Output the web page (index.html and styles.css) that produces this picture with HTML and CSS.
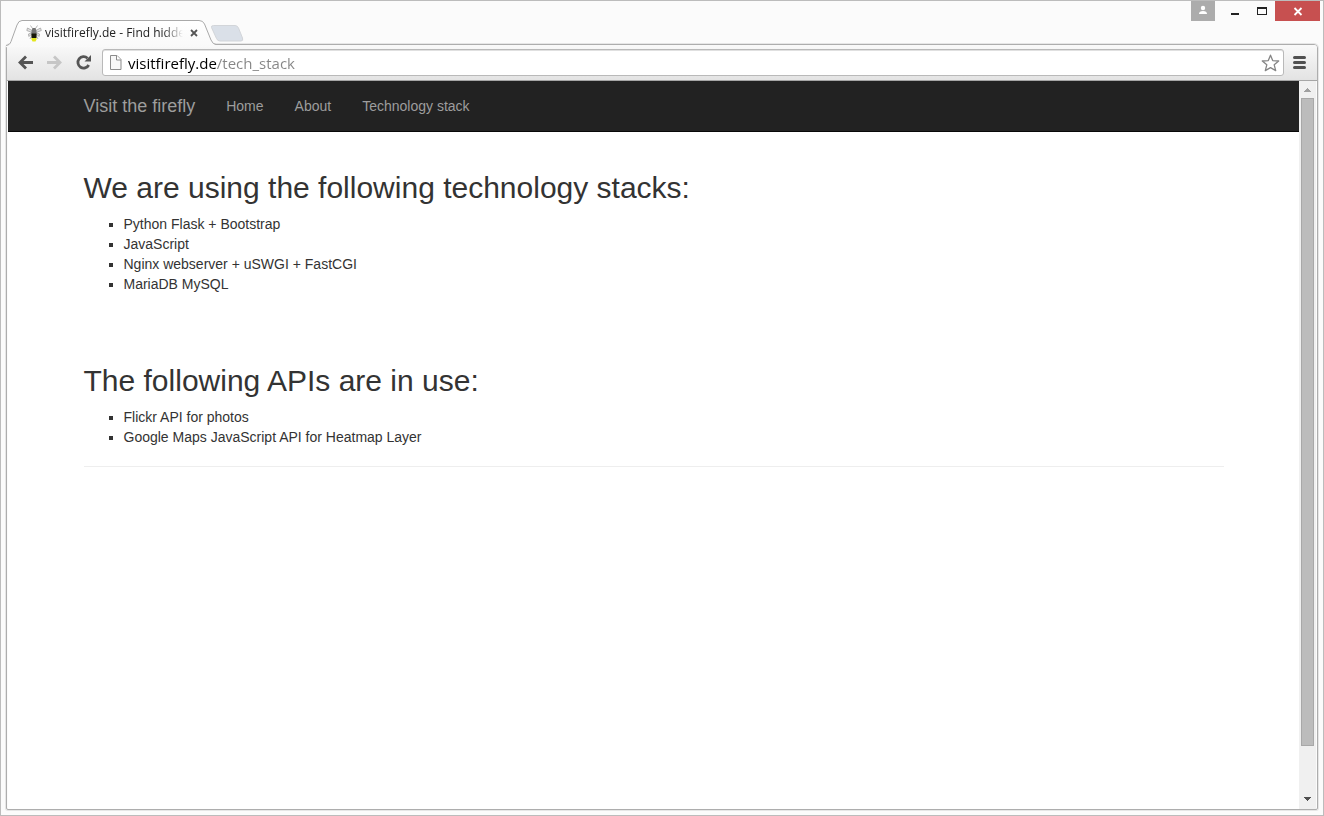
FILE: index.html
```html
<!DOCTYPE html>
<html lang="en">
<head>
<meta charset="utf-8">
<title>visitfirefly.de - Find hidden</title>
<link rel="stylesheet" href="styles.css">
</head>
<body>
<div class="window">
  <header class="titlebar">
    <div class="tab">
      <svg class="tab-shape" width="211" height="27" viewBox="0 0 211 27" aria-hidden="true">
        <defs><linearGradient id="tabFill" x1="0" y1="0" x2="0" y2="1"><stop offset="0" stop-color="#fff"/><stop offset="1" stop-color="#f9f9f9"/></linearGradient></defs>
        <path d="M1 27V25.500C4 25 5 24 6 21.500L12 5Q13.500 .5 17 .5H194Q198 .5 199.500 4L206 20Q208 24.500 211 24.500V27Z" fill="url(#tabFill)"/>
        <path d="M1 25.500C4 25 5 24 6 21.500L12 5Q13.500 .5 17 .5H194Q198 .5 199.500 4L206 20Q208 24.500 211 24.500" fill="none" stroke="#a9a9a9"/>
      </svg>
      <svg class="favicon" width="16" height="17" viewBox="0 0 16 17" aria-hidden="true">
        <path d="M7 6L1.500 3 .8 5.500 6 7.500M9 6L14.500 3 15.300 5.500 10 7.500M6.500 7.500L2.500 9 2.800 11.500 6 9M9.500 7.500L13.500 9 13.200 11.500 10 9" fill="#e4e4e4" stroke="#999" stroke-width=".7"/>
        <path d="M6.500 3.500L4.500 .5M9.500 3.500L11.500 .5M6 10L4 14M10 10L12 14" stroke="#999" stroke-width=".7"/>
        <path d="M6.500 3h3L10.500 6v4H5.500V6z" fill="#747474"/>
        <path d="M5.500 8.500h5v4.500h-5z" fill="#161608"/>
        <path d="M5.500 13h5v1.500L9.500 16.500h-3l-1-2z" fill="#e3e61d"/>
      </svg>
      <span class="tab-title">visitfirefly.de - Find hidden</span>
      <button class="tab-close" aria-label="Close tab"><svg width="8" height="8" viewBox="0 0 8 8"><path d="M1 1L7 7M7 1L1 7" stroke="#555" stroke-width="1.800"/></svg></button>
    </div>
    <button class="new-tab" aria-label="New tab"><svg width="34" height="17" viewBox="0 0 34 17"><path d="M3.500 .5H25Q27.500 .5 28.500 3L32.500 13Q33.500 16 31 16H10Q7.500 16 6.500 13.500L1.500 2.500Q1 .5 3.500 .5Z" fill="#dae0e8" stroke="#d2d5d9"/></svg></button>
    <div class="controls">
      <button class="user" aria-label="User"><svg width="24" height="20" viewBox="0 0 24 20"><circle cx="12" cy="7" r="2.200" fill="#fff"/><path d="M8 13Q8 10 12 10T16 13Z" fill="#fff"/></svg></button>
      <button class="control" aria-label="Minimize"><svg width="27" height="20" viewBox="0 0 27 20"><path d="M10 12h8v2h-8z" fill="#222"/></svg></button>
      <button class="control" aria-label="Maximize"><svg width="27" height="20" viewBox="0 0 27 20"><path d="M9 6h10v8H9zM10 8v5h8V8z" fill="#222" fill-rule="evenodd"/></svg></button>
      <button class="control close" aria-label="Close"><svg width="45" height="20" viewBox="0 0 45 20"><path d="M19.500 7L26.500 14M26.500 7L19.500 14" stroke="#fff" stroke-width="1.800"/></svg></button>
    </div>
  </header>
  <div class="frame">
    <div class="toolbar">
      <button class="tool" aria-label="Back"><svg width="17" height="16" viewBox="0 0 17 16"><path d="M16 7.500H3.500M9 1.500L3 7.500 9 13.500" fill="none" stroke="#555" stroke-width="2.800"/></svg></button>
      <button class="tool" aria-label="Forward"><svg width="17" height="16" viewBox="0 0 17 16"><path d="M1 7.500H13.500M8 1.500L14 7.500 8 13.500" fill="none" stroke="#c6c6c6" stroke-width="2.800"/></svg></button>
      <button class="tool" aria-label="Reload"><svg width="17" height="16" viewBox="0 0 17 16"><path d="M12.500 3.200A5.700 5.700 0 1 0 13.700 10" fill="none" stroke="#555" stroke-width="2.800"/><path d="M16 0V6.500H9.500Z" fill="#555"/></svg></button>
      <div class="omnibox">
        <svg width="13" height="16" viewBox="0 0 13 16" aria-hidden="true"><path d="M1.500 .5H8L12 4.500V14.500H1.500Z" fill="#f7f7f7" stroke="#8b8b8b"/><path d="M7.500 .5V5H12" fill="#fff" stroke="#8b8b8b"/></svg>
        <input class="url" type="text" aria-label="Address" value="visitfirefly.de/tech_stack">
        <button class="star" aria-label="Bookmark this page"><svg width="19" height="18" viewBox="0 0 19 18"><path d="M9.500 1.200L11.700 6.600 17.700 7 13.200 10.800 14.700 16.600 9.500 13.600 4.300 16.600 5.800 10.800 1.300 7 7.300 6.600Z" fill="#fff" stroke="#858585" stroke-width="1.300" stroke-linejoin="round"/></svg></button>
      </div>
      <button class="menu" aria-label="Menu"><svg width="13" height="13" viewBox="0 0 13 13"><path d="M1.500 1.500h10M1.500 6.500h10M1.500 11.500h10" stroke="#505050" stroke-width="3" stroke-linecap="round"/></svg></button>
    </div>
    <div class="viewport">
      <div class="page">
        <nav class="navbar">
          <div class="container nav-row">
            <a class="brand" href="#">Visit the firefly</a>
            <a class="nav-link" href="#">Home</a>
            <a class="nav-link" href="#">About</a>
            <a class="nav-link" href="#">Technology stack</a>
          </div>
        </nav>
        <main class="container content">
          <section class="stack">
            <h2>We are using the following technology stacks:</h2>
            <ul>
              <li>Python Flask + Bootstrap</li>
              <li>JavaScript</li>
              <li>Nginx webserver + uSWGI + FastCGI</li>
              <li>MariaDB MySQL</li>
            </ul>
          </section>
          <section class="stack">
            <h2>The following APIs are in use:</h2>
            <ul>
              <li>Flickr API for photos</li>
              <li>Google Maps JavaScript API for Heatmap Layer</li>
            </ul>
          </section>
          <hr>
        </main>
      </div>
      <div class="scrollbar">
        <button class="scroll-arrow" aria-label="Scroll up"><svg width="18" height="17" viewBox="0 0 18 17"><path d="M8 7h1v1h1v1h1v1h1v1H5v-1h1V9h1V8h1z" fill="#a0a0a0"/></svg></button>
        <div class="track"><div class="thumb"></div></div>
        <button class="scroll-arrow" aria-label="Scroll down"><svg width="18" height="17" viewBox="0 0 18 17"><path d="M5 5h7v1h-1v1h-1v1H9v1H8V8H7V7H6V6H5z" fill="#505050"/></svg></button>
      </div>
    </div>
  </div>
</div>
</body>
</html>
```
FILE: styles.css
```css
* { box-sizing: border-box; }
body { margin: 0; }
button { border: 0; padding: 0; margin: 0; background: none; display: flex; align-items: center; justify-content: center; }
svg { display: block; flex: none; }

.window { display: flex; flex-direction: column; height: 100vh; border: 1px solid #bcbcbc; background: #fbfbfb; padding-bottom: 5px; }

.titlebar { display: flex; align-items: flex-start; height: 43px; flex: none; padding: 0 3px 0 8px; }
.tab { position: relative; z-index: 1; display: flex; align-items: center; width: 201px; height: 26px; margin-top: 19px; padding: 0 12px 0 17px; }
.tab-shape { position: absolute; left: -4px; top: 0; }
.favicon { position: relative; flex: none; }
.tab-title { position: relative; flex: 1; min-width: 0; margin: 0 7px 0 3px; overflow: hidden; white-space: nowrap; font: 12px/16px "Open Sans", "Noto Sans", sans-serif; color: #222; mask-image: linear-gradient(90deg, #000 calc(100% - 20px), transparent); }
.tab-close { position: relative; flex: none; }
.new-tab { margin-top: 24px; }
.controls { display: flex; margin-left: auto; }
.user { background: #acacac; margin-right: 6px; }
.close { background: #c75050; }

.frame { display: flex; flex-direction: column; flex: 1; min-height: 0; margin: 0 5px; border: 1px solid #adadad; border-radius: 4px 4px 2px 2px; box-shadow: 0 0 0 1px #e6e6e6; }
.toolbar { display: flex; align-items: center; flex: none; height: 36px; padding: 0 10px; border-bottom: 1px solid #a6a6a6; border-radius: 3px 3px 0 0; background: linear-gradient(#f9f9f9, #e3e3e3); }
.tool { width: 17px; margin-right: 12px; }
.omnibox { display: flex; align-items: center; flex: 1; height: 27px; margin: 0 8px 0 -2px; padding: 0 3px 0 6px; gap: 6px; border: 1px solid #b9b9b9; border-radius: 3px; background: #fff; box-shadow: inset 0 1px #e0e0e0; }
.url { flex: 1; min-width: 0; height: 24px; border: 0; padding: 0; outline: 0; font: 15px/24px "Open Sans", "Noto Sans", sans-serif; color: transparent; background: linear-gradient(90deg, #000 89px, #858585 89px); background-clip: text; -webkit-background-clip: text; }
.menu { width: 15px; }

.viewport { display: flex; flex: 1; min-height: 0; margin: 0 1px; }
.page { flex: 1; min-width: 0; background: #fff; font: 14px/20px "Liberation Sans", Arial, sans-serif; color: #333; }
.container { max-width: 1170px; margin: 0 auto; padding: 0 15px; }
.navbar { background: #222; border-bottom: 1px solid #080808; }
.nav-row { display: flex; align-items: center; height: 50px; gap: 31px; }
.brand, .nav-link { color: #9d9d9d; text-decoration: none; }
.brand { font-size: 18px; }
.content { padding-top: 39px; }
.stack + .stack { margin-top: 70px; }
h2 { margin: 0 0 10px; font-size: 30px; line-height: 33px; font-weight: normal; }
ul { margin: 0; padding-left: 40px; list-style: square; }
hr { margin: 19px 0; border: 0; border-top: 1px solid #eee; }

.scrollbar { display: flex; flex-direction: column; flex: none; width: 17px; background: #f0f0f0; }
.scroll-arrow { height: 17px; flex: none; }
.track { flex: 1; min-height: 0; padding: 0 2px; }
.thumb { height: 93.4%; border: 1px solid #a8a8a8; background: #bcbcbc; }
```
